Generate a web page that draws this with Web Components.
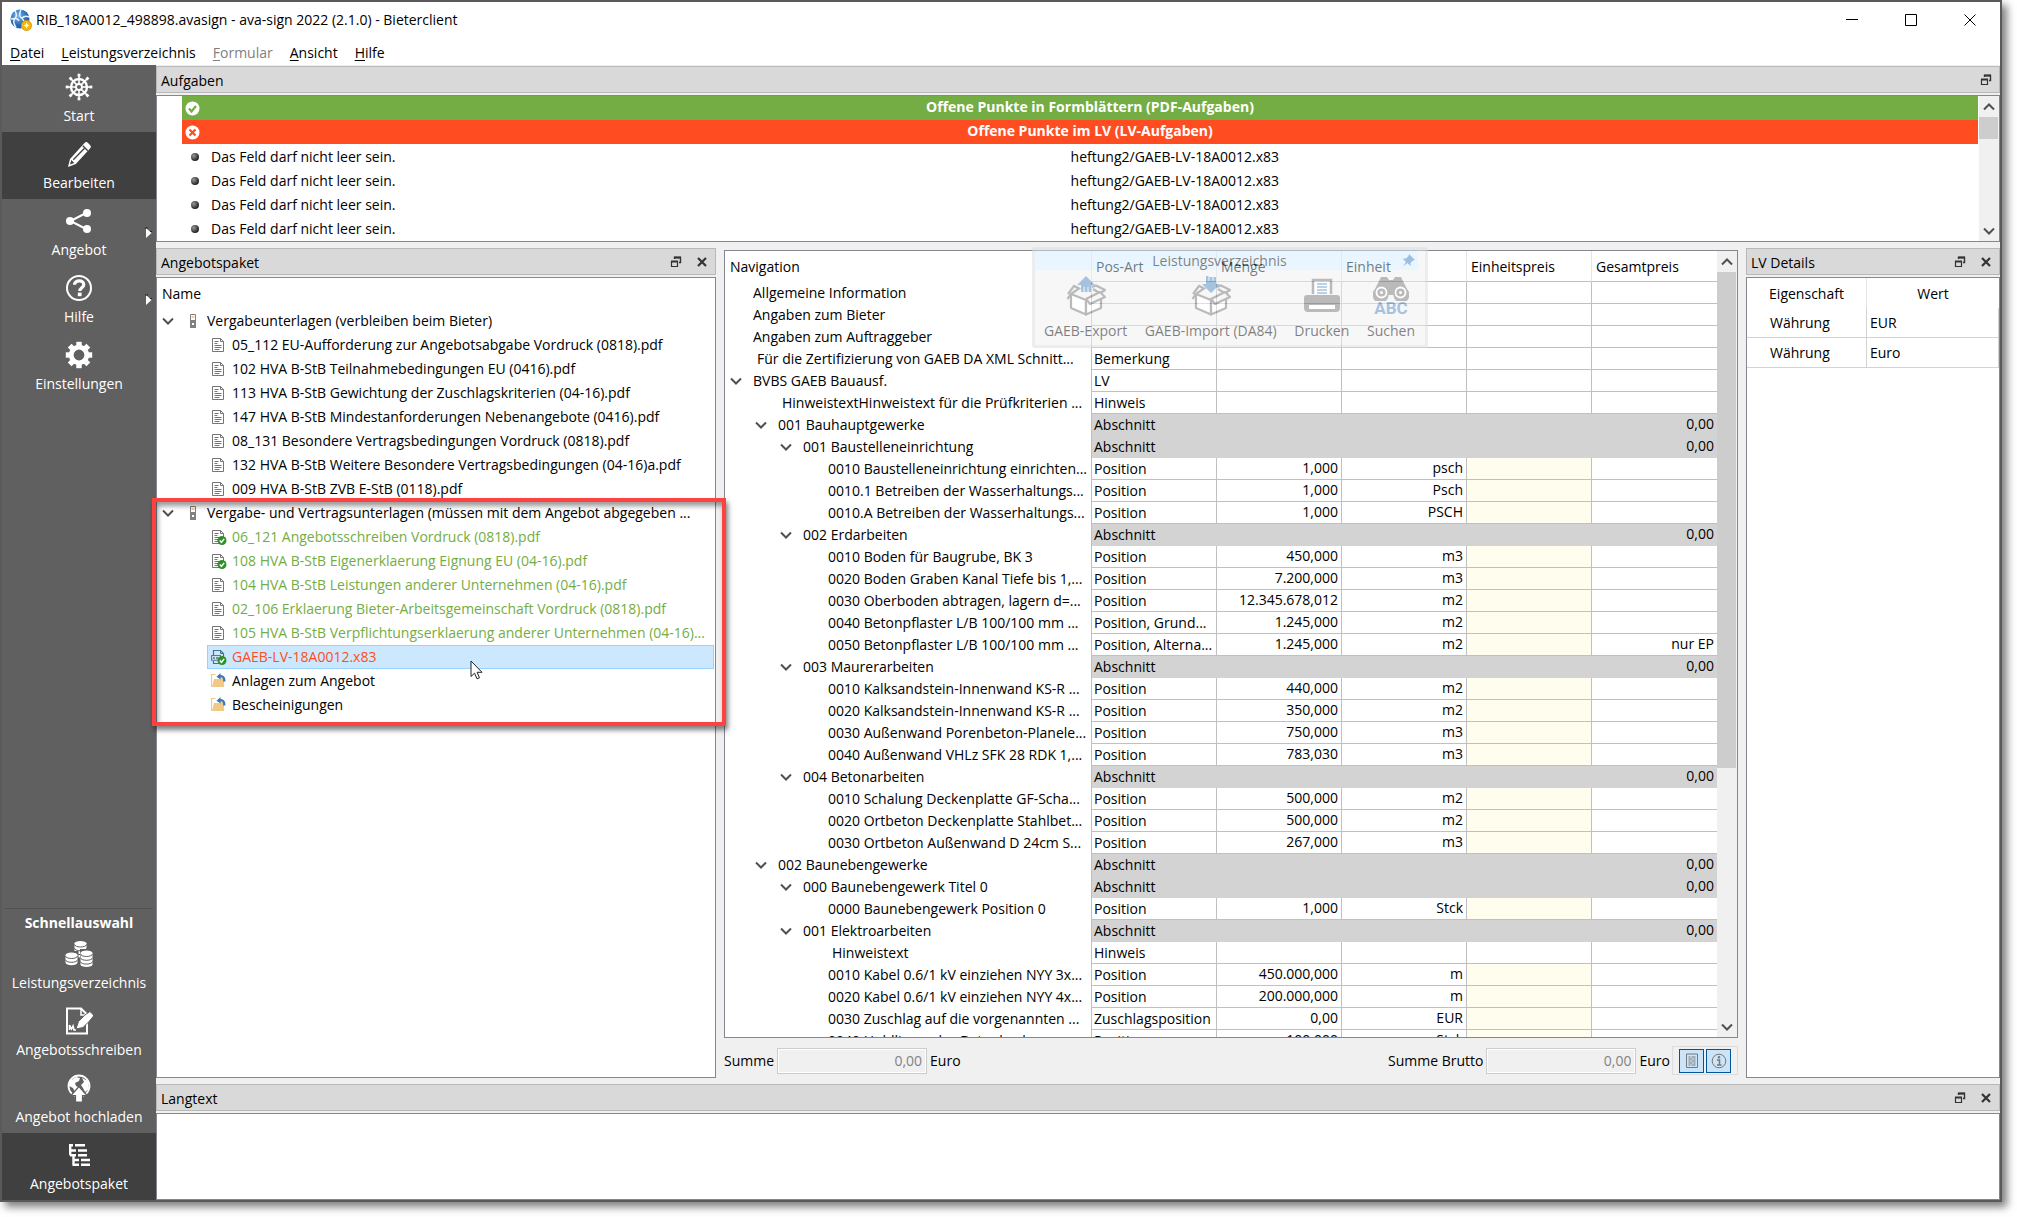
<!DOCTYPE html>
<html lang="de">
<head>
<meta charset="utf-8">
<title>ava-sign 2022</title>
<style>
html,body{margin:0;height:100%;background:#fff}
body{font:14px/20px "Open Sans","Noto Sans",sans-serif;color:#000;overflow:hidden}
</style>
</head>
<body>
<ava-app></ava-app>
<script>
const base = `<style>
*{box-sizing:border-box}
:host{display:block;box-sizing:border-box}
button{font:inherit;color:inherit;background:none;border:0;padding:0;margin:0;text-align:inherit}
a{color:inherit;text-decoration:none}
svg{display:block;flex:none}
</style>`;
function define(name, render, after){
  customElements.define(name, class extends HTMLElement{
    constructor(){ super(); this.attachShadow({mode:'open'}); }
    connectedCallback(){
      this.shadowRoot.innerHTML = base + render(this);
      if(after) after(this);
    }
  });
}
const svg = (w,h,vb,body,extra='') => `<svg width="${w}" height="${h}" viewBox="${vb}" aria-hidden="true" ${extra}>${body}</svg>`;
const spokes = (n,cx,cy,r1,r2,w,col) => Array.from({length:n},(_,i)=>{
  const a=i*2*Math.PI/n, c=Math.cos(a), s=Math.sin(a);
  return `<path d="M${(cx+c*r1).toFixed(2)} ${(cy+s*r1).toFixed(2)}L${(cx+c*r2).toFixed(2)} ${(cy+s*r2).toFixed(2)}" stroke="${col}" stroke-width="${w}"/>`;
}).join('');

const ICONS = {
  wheel: svg(28,28,'0 0 28 28',`<g fill="none" stroke="#fff"><circle cx="14" cy="14" r="8" stroke-width="2.4"/><circle cx="14" cy="14" r="3" stroke-width="1.8"/></g>`+spokes(8,14,14,3,12.6,1.6,'#fff')+spokes(8,14,14,10.5,13.3,2.8,'#fff')),
  pencil: svg(28,28,'0 0 28 28',`<path d="M3 27l2-8L19.500 3c1.200-1.200 2.300-1.200 3.500 0l2 2c1.200 1.200 1.200 2.300 0 3.500L10.800 24z" fill="#fff"/><path d="M8.300 19.800L19.500 8.300" stroke="#404040" stroke-width="1.300"/><path d="M17.800 5.800l5 5" stroke="#404040" stroke-width="1.300"/><path d="M5 24.500l1.300-4.500 3 3z" fill="#404040"/>`),
  share: svg(28,28,'0 0 28 28',`<path d="M22 5.500L5.500 14 22 22.500" fill="none" stroke="#fff" stroke-width="2"/><circle cx="22" cy="6" r="4" fill="#fff"/><circle cx="5" cy="14" r="4" fill="#fff"/><circle cx="22" cy="22" r="4" fill="#fff"/>`),
  help: svg(28,28,'0 0 28 28',`<circle cx="14" cy="14" r="12" fill="none" stroke="#fff" stroke-width="2"/><path d="M9.500 10.800c.2-5.300 9.300-5.300 9.300-.3 0 3.200-4 3.300-4 6.500" fill="none" stroke="#fff" stroke-width="3.200"/><path d="M12.800 18.600h3.800v3.600h-3.800z" fill="#fff"/>`),
  gear: svg(28,28,'0 0 28 28',spokes(8,14,14,8,13.2,5.4,'#fff')+`<circle cx="14" cy="14" r="7.800" fill="none" stroke="#fff" stroke-width="4.800"/>`),
  coins: svg(28,28,'0 0 28 28',(()=>{const st=(x,y,n)=>{let o=`<path d="M${x-6} ${y}v${n*3.800}a6 2.600 0 0 0 12 0v-${n*3.800}z" fill="#fff"/><ellipse cx="${x}" cy="${y}" rx="6" ry="2.600" fill="#fff"/>`;for(let i=0;i<n;i++)o+=`<path d="M${x-6} ${y+.9+i*3.800}a6 2.600 0 0 0 12 0" fill="none" stroke="#606060" stroke-width="1"/>`;return o};return st(15.500,3.500,3)+`<path d="M0 11h13.500v14H0zM15 9h13v19H15z" fill="#606060"/>`+st(6.500,15,2)+st(21.500,13,3)})()),
  sign: svg(28,28,'0 0 28 28',`<path d="M2 1.500h14l6 6v19H2z" fill="none" stroke="#fff" stroke-width="2"/><path d="M16 2v6h6" fill="none" stroke="#fff" stroke-width="1.500"/><path d="M11 22l2.500-7.500Q20 7 25 4.500L29 8.500Q25 14 18 20.500z" fill="#fff" stroke="#606060" stroke-width="1"/><path d="M4.500 23v-5l2 4 1.500-3 1 4h2" fill="none" stroke="#fff" stroke-width="1.600"/>`),
  globe: svg(28,28,'0 0 28 28',`<circle cx="14" cy="12" r="10.500" fill="none" stroke="#fff" stroke-width="1.800"/><path d="M5 7l6-4 4 1-1 3-4 2 1 3 4 2-2 5-3-1-2-4-4-2zM17 4l6 3 1 8-4 3-2-4-2-3 3-3z" fill="#fff"/><path d="M14 12.500l8 9h-4.500V28h-7v-6.500H6z" fill="#fff" stroke="#606060" stroke-width="1.200"/>`),
  tree: svg(28,28,'0 0 28 28',`<g fill="none" stroke="#fff" stroke-width="2.400"><path d="M5.200 3v11.200M4 4.200h4M10 4.200h10M5 9.500h6M13 9.500h9M5 14.200h6M13 14.200h9M8.500 14v10.800M8 19h6M16 19h9M8 23.800h6M16 23.800h9"/></g>`),
  doc: svg(14,16,'0 0 14 16',`<path d="M1.500 1.500h8l3 3v10h-11z" fill="#fff" stroke="#757575"/><path d="M9.500 1.500v3h3M3.500 4.500h4M3.500 6.500h3M3.500 8.500h7M3.500 10.500h7M3.500 12.500h5" fill="none" stroke="#757575"/>`),
  node: svg(6,14,'0 0 6 14',`<path d="M.5.500h5v13h-5z" fill="#fff" stroke="#808080"/><path d="M1.500 3h3" stroke="#f0a030"/><path d="M0 6h6v8H0z" fill="#808080"/><path d="M2 9h2v2H2z" fill="#fff"/>`),
  folder: svg(16,16,'0 0 16 16',`<path d="M4.500 1.500h-4V14" fill="#fff" stroke="#f0c987" stroke-width="1.200"/><path d="M3 6h5.500l1-1.500H13V14H1z" fill="#f0c987"/><path d="M8 4.200c2-2 5.800-1 5.300 4.300" fill="none" stroke="#3b78b5" stroke-width="2.200"/><path d="M5.500 3.800L9.500 0v6.500z" fill="#3b78b5"/>`),
};
const tick = `<circle cx="11" cy="11.500" r="4.500" fill="#2f8f2a"/><path d="M8.800 11.500l1.700 1.800 2.700-3.400" fill="none" stroke="#fff" stroke-width="1.500"/>`;
ICONS.docok = svg(16,16,'0 0 16 16',`<path d="M1.500 1.500h8l3 3v10h-11z" fill="#fff" stroke="#757575"/><path d="M9.500 1.500v3h3M3.500 4.500h4M3.500 6.500h3M3.500 8.500h7M3.500 10.500h7M3.500 12.500h5" fill="none" stroke="#757575"/>`+tick);
ICONS.lv = svg(16,16,'0 0 16 16',`<path d="M2.500 7v-5.500h7l3 3V8M2.500 12v2.500H8" fill="none" stroke="#46718f" stroke-width="1.200"/><path d="M9.500 1.500v3h3" fill="none" stroke="#46718f"/><rect x=".600" y="6.600" width="9" height="4.600" fill="#dcecf8" stroke="#46718f"/><path d="M2 9h2M5 9h2" stroke="#46718f" stroke-width="1.500"/>`+tick);
const chevron = (d) => svg(14,10,'0 0 14 10',`<path d="${d==='up'?'M2 7.500L7 2.500l5 5':'M2 2.500l5 5 5-5'}" fill="none" stroke="#505050" stroke-width="2"/>`);
const floatIcon = svg(12,12,'0 0 12 12',`<path d="M4.500 3V1.500h6v5H9" fill="none" stroke="#333" stroke-width="1.400"/><path d="M4 1.500h7" stroke="#333" stroke-width="2"/><path d="M1.500 5.500h6v5h-6z" fill="#d9d9d9" stroke="#333" stroke-width="1.200"/><path d="M1 5.500h7" stroke="#333" stroke-width="2"/>`);
const closeIcon = svg(12,12,'0 0 12 12',`<path d="M2 2l8 8M10 2l-8 8" stroke="#333" stroke-width="2.200"/>`);

define('title-bar', () => `<style>
:host{display:flex;align-items:center;height:36px;padding-left:8px}
h1{font-size:14px;font-weight:400;margin:0 auto 0 4px}
button{width:59px;height:30px;display:grid;place-items:center}
button:last-child{margin-right:1px}
</style>
${svg(22,22,'0 0 22 22',`<defs><radialGradient id="g" cx=".4" cy=".35"><stop offset="0" stop-color="#7db8ea"/><stop offset="1" stop-color="#1f66b3"/></radialGradient></defs><circle cx="10" cy="10" r="9.500" fill="url(#g)"/><path d="M5 1.500c2 4 2 6 0 8s-1 6 1 9M11 .5c-2 4-2 7 1 9s2 6 0 10M1 10c3-1 7-1 8 2M12 9c2-2 5-2 7-1" fill="none" stroke="#e8f3fd" stroke-width="1.500"/><circle cx="16.500" cy="16.500" r="5" fill="#f3b816" stroke="#d99a00"/><path d="M16.500 13.500l1 2 2 1-2 1-1 2-1-2-2-1 2-1z" fill="#fff6cf"/>`)}
<h1>RIB_18A0012_498898.avasign - ava-sign 2022 (2.1.0) - Bieterclient</h1>
<button aria-label="Minimieren">${svg(12,12,'0 0 12 12','<path d="M0 5.500h12" stroke="#000"/>')}</button>
<button aria-label="Maximieren">${svg(12,12,'0 0 12 12','<path d="M.5.500h11v11H.5z" fill="none" stroke="#000"/>')}</button>
<button aria-label="Schließen">${svg(12,12,'0 0 12 12','<path d="M.5.500l11 11M11.500.500l-11 11" stroke="#000"/>')}</button>`);

define('menu-bar', () => `<style>
nav{display:flex;gap:17px;height:28px;align-items:center;padding:2px 8px 0}
button:disabled{color:#808080}
u{text-underline-offset:2px}
</style><nav>
<button><u>D</u>atei</button><button><u>L</u>eistungsverzeichnis</button><button disabled><u>F</u>ormular</button><button><u>A</u>nsicht</button><button><u>H</u>ilfe</button></nav>`);

define('side-item', el => `<style>
button{width:100%;height:67px;display:flex;flex-direction:column;align-items:center;justify-content:flex-start;gap:5px;padding-top:8px;color:#fff;position:relative;white-space:nowrap}
:host([active]) button{background:#404040}
.more{position:absolute;right:3px;top:28px}
</style><button>${ICONS[el.getAttribute('icon')]}<slot></slot>${el.hasAttribute('more')?svg(8,12,'0 0 8 12','<path d="M1 1l5.500 5L1 11z" fill="#fff"/><path d="M0 1h3M5 4.500h2" stroke="#222"/>','class="more"'):''}</button>`);

define('side-bar', () => `<style>
:host{background:#606060;display:flex;flex-direction:column}
.quick{margin-top:auto}
h2{margin:0 3px;border-top:1px solid #505050;font-size:14px;line-height:20px;padding:4px 0 0;text-align:center;color:#fff;font-weight:700;height:24px}
</style>
<side-item icon="wheel">Start</side-item>
<side-item icon="pencil" active>Bearbeiten</side-item>
<side-item icon="share" more>Angebot</side-item>
<side-item icon="help" more>Hilfe</side-item>
<side-item icon="gear">Einstellungen</side-item>
<div class="quick"><h2>Schnellauswahl</h2>
<side-item icon="coins">Leistungsverzeichnis</side-item>
<side-item icon="sign">Angebotsschreiben</side-item>
<side-item icon="globe">Angebot hochladen</side-item>
<side-item icon="tree" active>Angebotspaket</side-item></div>`);

define('dock-panel', el => `<style>
:host{display:flex;flex-direction:column;min-height:0;min-width:0}
header{display:flex;align-items:center;height:27px;background:#d9d9d9;border:1px solid #b8b8b8;padding:0 7px 0 4px;gap:14px}
h2{font:inherit;margin:0 auto 0 0;padding-top:3px}
.body{flex:1;margin-top:2px;border:1px solid #828790;background:#fff;min-height:0;overflow:hidden;display:flex;flex-direction:column}
</style><header><h2>${el.getAttribute('heading')}</h2><button aria-label="Abdocken">${floatIcon}</button>${el.hasAttribute('closable')?`<button aria-label="Schließen">${closeIcon}</button>`:''}</header><div class="body"><slot></slot></div>`);

define('scroll-bar', el => `<style>
:host{display:flex;flex-direction:column;background:#f0f0f0;width:20px;flex:none}
button{height:21px;display:grid;place-items:center;flex:none}
.track{flex:1;min-height:0}
.thumb{background:#cdcdcd;height:${el.getAttribute('size')};margin-right:1px}
</style><button aria-label="Nach oben">${chevron('up')}</button><div class="track"><div class="thumb"></div></div><button aria-label="Nach unten">${chevron('down')}</button>`);

define('task-list', () => `<style>
:host{display:flex;flex:1;min-height:0}
.list{flex:1;padding-left:25px;padding-right:1px}
.bar,.row{height:24px;display:flex;align-items:center}
.bar{color:#fff;font-weight:700;padding-left:3px}
.bar span{flex:1;text-align:center;padding:0 0 2px 2px}
.ok{background:#74ad43}.err{background:#ff4d21}
.row{display:grid;grid-template-columns:29px 18fr 19fr;padding-top:1px}
.dot{width:8px;height:8px;border-radius:50%;background:radial-gradient(circle at 35% 35%,#999,#222 70%);margin-left:9px}
</style><div class="list">
<div class="bar ok">${svg(15,15,'0 0 15 15','<circle cx="7.500" cy="7.500" r="7" fill="#fff"/><path d="M4 7.500l2.500 3 4.500-5.500" fill="none" stroke="#74ad43" stroke-width="2.200"/>')}<span>Offene Punkte in Formblättern (PDF-Aufgaben)</span></div>
<div class="bar err">${svg(15,15,'0 0 15 15','<circle cx="7.500" cy="7.500" r="7" fill="#fff"/><path d="M4.500 4.500l6 6M10.500 4.500l-6 6" fill="none" stroke="#ff4d21" stroke-width="2.200"/>')}<span>Offene Punkte im LV (LV-Aufgaben)</span></div>
${'<div class="row"><i class="dot"></i><span>Das Feld darf nicht leer sein.</span><span>heftung2/GAEB-LV-18A0012.x83</span></div>'.repeat(4)}
</div><scroll-bar size="22px"></scroll-bar>`);

const DOCS = [
 ['g','Vergabeunterlagen (verbleiben beim Bieter)'],
 ['doc','05_112 EU-Aufforderung zur Angebotsabgabe Vordruck (0818).pdf'],
 ['doc','102 HVA B-StB Teilnahmebedingungen EU (0416).pdf'],
 ['doc','113 HVA B-StB Gewichtung der Zuschlagskriterien (04-16).pdf'],
 ['doc','147 HVA B-StB Mindestanforderungen Nebenangebote (0416).pdf'],
 ['doc','08_131 Besondere Vertragsbedingungen Vordruck (0818).pdf'],
 ['doc','132 HVA B-StB Weitere Besondere Vertragsbedingungen (04-16)a.pdf'],
 ['doc','009 HVA B-StB ZVB E-StB (0118).pdf'],
 ['g','Vergabe- und Vertragsunterlagen (müssen mit dem Angebot abgegeben ...'],
 ['docok','06_121 Angebotsschreiben Vordruck (0818).pdf','done'],
 ['docok','108 HVA B-StB Eigenerklaerung Eignung EU (04-16).pdf','done'],
 ['doc','104 HVA B-StB Leistungen anderer Unternehmen (04-16).pdf','done'],
 ['doc','02_106 Erklaerung Bieter-Arbeitsgemeinschaft Vordruck (0818).pdf','done'],
 ['doc','105 HVA B-StB Verpflichtungserklaerung anderer Unternehmen (04-16)...','done'],
 ['lv','GAEB-LV-18A0012.x83','sel'],
 ['folder','Anlagen zum Angebot'],
 ['folder','Bescheinigungen'],
];
define('package-tree', () => `<style>
:host{padding-right:1px}
.head{height:31px;padding:6px 5px 0}
.row{display:flex;align-items:center;height:24px;white-space:nowrap}
.g{padding-left:4px}
.g .node{margin:0 11px 0 15px}
.leaf{margin-left:50px;padding-left:4px}
.leaf i{width:21px;flex:none}
.sel{border:1px solid #99d1ff;background:#cce8ff;color:#ff4d21;padding-left:3px}
.done{color:#74ad43}
</style><div class="head">Name</div>${DOCS.map(([k,t,c])=>k==='g'
 ? `<div class="row g">${chevron('down')}<span class="node">${ICONS.node}</span><span>${t}</span></div>`
 : `<div class="row leaf ${c||''}"><i>${ICONS[k]}</i><span>${t}</span></div>`).join('')}`);

const P='Position';
const LV = [
 [0,'Allgemeine Information'],[0,'Angaben zum Bieter'],[0,'Angaben zum Auftraggeber'],
 ['0n','Für die Zertifizierung von GAEB DA XML Schnitt...','Bemerkung'],
 ['0o','BVBS GAEB Bauausf.','LV'],
 ['1n','HinweistextHinweistext für die Prüfkriterien ...','Hinweis'],
 ['1o','001 Bauhauptgewerke','Abschnitt'],['2o','001 Baustelleneinrichtung','Abschnitt'],
 [3,'0010 Baustelleneinrichtung einrichten...',P,'1,000','psch'],
 [3,'0010.1 Betreiben der Wasserhaltungs...',P,'1,000','Psch'],
 [3,'0010.A Betreiben der Wasserhaltungs...',P,'1,000','PSCH'],
 ['2o','002 Erdarbeiten','Abschnitt'],
 [3,'0010 Boden für Baugrube, BK 3',P,'450,000','m3'],
 [3,'0020 Boden Graben Kanal Tiefe bis 1,...',P,'7.200,000','m3'],
 [3,'0030 Oberboden abtragen, lagern d=...',P,'12.345.678,012','m2'],
 [3,'0040 Betonpflaster L/B 100/100 mm ...','Position, Grund...','1.245,000','m2'],
 [3,'0050 Betonpflaster L/B 100/100 mm ...','Position, Alterna...','1.245,000','m2','nur EP'],
 ['2o','003 Maurerarbeiten','Abschnitt'],
 [3,'0010 Kalksandstein-Innenwand KS-R ...',P,'440,000','m2'],
 [3,'0020 Kalksandstein-Innenwand KS-R ...',P,'350,000','m2'],
 [3,'0030 Außenwand Porenbeton-Planele...',P,'750,000','m3'],
 [3,'0040 Außenwand VHLz SFK 28 RDK 1,...',P,'783,030','m3'],
 ['2o','004 Betonarbeiten','Abschnitt'],
 [3,'0010 Schalung Deckenplatte GF-Scha...',P,'500,000','m2'],
 [3,'0020 Ortbeton Deckenplatte Stahlbet...',P,'500,000','m2'],
 [3,'0030 Ortbeton Außenwand D 24cm S...',P,'267,000','m3'],
 ['1o','002 Baunebengewerke','Abschnitt'],['2o','000 Baunebengewerk Titel 0','Abschnitt'],
 [3,'0000 Baunebengewerk Position 0',P,'1,000','Stck'],
 ['2o','001 Elektroarbeiten','Abschnitt'],
 ['3n','Hinweistext','Hinweis'],
 [3,'0010 Kabel 0.6/1 kV einziehen NYY 3x...',P,'450.000,000','m'],
 [3,'0020 Kabel 0.6/1 kV einziehen NYY 4x...',P,'200.000,000','m'],
 [3,'0030 Zuschlag auf die vorgenannten ...','Zuschlagsposition','0,00','EUR'],
 [3,'0040 Hohlliegendes Betonbecken...',P,'100,000','Stck'],
];
define('lv-grid', () => `<style>
:host{display:flex;border:1px solid #828790;background:#fff;min-height:0;overflow:hidden}
.wrap{flex:1;overflow:hidden;min-width:0}
table{border-collapse:separate;border-spacing:0;table-layout:fixed;width:100%}
col.c{width:125px}
th{font-weight:400;text-align:left;height:31px;padding:1px 4px 0 5px;border-right:1px solid #e5e5e5;border-bottom:1px solid #c0c0c0}
th:not(:first-child){padding-left:4px}
th:first-child{border-bottom:0}
td{height:22px;padding:0 3px 0 2px;border-right:1px solid #c0c0c0;border-bottom:1px solid #c0c0c0;white-space:nowrap;overflow:hidden;line-height:20px}
td:first-child{border-bottom:0;padding:0}
th:last-child,td:last-child{border-right:0}
td:nth-child(n+3){text-align:right;line-height:18px;padding-bottom:2px}
.nav{display:flex;align-items:center;line-height:22px}
.nav i{width:24px;flex:none}
.d0{padding-left:4px}.d1{padding-left:29px}.d2{padding-left:54px}.d3{padding-left:79px}
.note{padding-left:4px}
.sec td:not(:first-child){background:#d3d3d3;border-color:#d3d3d3}
.pos td:nth-child(5){background:#fffdee}
</style><div class="wrap"><table><colgroup><col><col class="c"><col class="c"><col class="c"><col class="c"><col class="c"></colgroup>
<thead><tr><th>Navigation</th><th>Pos-Art</th><th>Menge</th><th>Einheit</th><th>Einheitspreis</th><th>Gesamtpreis</th></tr></thead>
<tbody>${LV.map(([l,t,a='',m='',e='',g=''])=>{const s=String(l);const sec=a==='Abschnitt';
return `<tr class="${sec?'sec':m?'pos':''}"><td><div class="nav d${s[0]}"><i>${s[1]==='o'?chevron('down'):''}</i><span class="${s[1]==='n'?'note':''}">${t}</span></div></td><td>${a}</td><td>${m}</td><td>${e}</td><td></td><td>${sec?'0,00':g}</td></tr>`}).join('')}</tbody></table></div>
<scroll-bar size="496px"></scroll-bar>`);

define('lv-details', () => `<style>
table{border-collapse:separate;border-spacing:0;width:100%;table-layout:fixed}
col:first-child{width:120px}
th{font-weight:400;height:30px;padding:2px 0 0;border-right:1px solid #e5e5e5}
td{height:30px;padding:0 3px;border-right:1px solid #d3d3d3;border-bottom:1px solid #d3d3d3}
td:first-child{padding-left:23px}
th:last-child{border-right:0}
</style><table><colgroup><col><col></colgroup><thead><tr><th>Eigenschaft</th><th>Wert</th></tr></thead><tbody><tr><td>Währung</td><td>EUR</td></tr><tr><td>Währung</td><td>Euro</td></tr></tbody></table>`);

define('sum-bar', () => `<style>
:host{display:flex;align-items:center;height:40px;padding-top:5px}
label{margin-right:3px}
input{width:150px;height:26px;border:1px solid #ccc;outline:1px solid #fff;outline-offset:-2px;background:#f0f0f0;color:#838383;font:inherit;text-align:right;padding:0 4px;margin:0 3px 0 0}
.right{margin-left:auto;display:flex;align-items:center}
.tools{display:flex;gap:2px;border:1px solid #dcdcdc;padding:2px 6px;margin-left:2px;height:29px}
.tools button{width:25px;height:24px;border:1px solid #00559b;background:#cce4f7;display:grid;place-items:center}
</style>
<label for="n">Summe</label><input id="n" value="0,00" disabled><span>Euro</span>
<div class="right"><label for="b">Summe Brutto</label><input id="b" value="0,00" disabled><span>Euro</span>
<div class="tools"><button aria-label="Liste">${svg(14,16,'0 0 14 16','<path d="M1.500 1h11v13.500h-11z" fill="none" stroke="#777"/><path d="M3.500 4h2m1 0h4M3.500 6h4m1 0h2M3.500 8h2m1 0h4M3.500 10h4m1 0h2M3.500 12h2m1 0h4" stroke="#777"/>')}</button><button aria-label="Info">${svg(16,16,'0 0 16 16','<circle cx="8" cy="8" r="6.800" fill="none" stroke="#777"/><path d="M6 7h2.500v5M6 12h4.500" fill="none" stroke="#777" stroke-width="1.500"/><circle cx="8" cy="4.300" r="1.200" fill="#777"/>')}</button></div></div>`);

const boxShape = `<path d="M5 18l15 6v14.500L5 32z" fill="#fff" stroke="#777" stroke-width="2.200" stroke-linejoin="round"/><path d="M20 24l15-5v13L20 38.500z" fill="#fff" stroke="#777" stroke-width="2.200" stroke-linejoin="round"/><path d="M5 18l-3.500 5M5 18l8-5.500-5-2.500-6 8M27 13l8 5" fill="none" stroke="#777" stroke-width="2.200"/><path d="M20 23l4 5 15-7-5-5z" fill="#f0f0f0" stroke="#777" stroke-width="2.200" stroke-linejoin="round"/><path d="M26 11l4-1.500 9 4.500-4 2.500" fill="none" stroke="#777" stroke-width="2.200" stroke-linejoin="round"/>`;
define('float-tools', () => `<style>
:host{width:396px;height:101px;background:#f0f0f0;border:3px solid #ddd;border-radius:3px;opacity:.5}
.t{height:20px;background:#d6efff;display:flex;align-items:center;justify-content:center;position:relative;margin-right:7px;padding:2px 14px 0 0}
.t button{position:absolute;right:3px;top:4px}
.row{display:flex;justify-content:space-between;padding:6px 10px 0 9px}
.row button{display:flex;flex-direction:column;align-items:center;gap:5px;white-space:nowrap}
.ic{display:grid;place-items:center;height:40px}
.find{font:700 17px/15px Roboto,"Open Sans",sans-serif;color:#4d86c0;place-items:end center}
</style><div class="t"><span>Leistungsverzeichnis</span><button aria-label="Anheften">${svg(13,13,'0 0 13 13','<path d="M7 0l6 6-2 .5-2.500 2.500 0 3L5.500 9 1 12.500 4 8 .5 4.500l3.500 0L6.500 2z" fill="#3d7fc0"/>')}</button></div>
<div class="row">
<button><span class="ic">${svg(40,40,'0 0 40 40',boxShape+'<path d="M20 0l9 9h-4v7h-2.500v-5h-1v5h-3v-5h-1v5H15V9h-4z" fill="#4d86c0"/>')}</span>GAEB-Export</button>
<button><span class="ic">${svg(40,40,'0 0 40 40',boxShape+'<path d="M20 17l-9-9h4V0h2.500v5h1V1h3v4h1V1H25v7h4z" fill="#4d86c0"/>')}</span>GAEB-Import (DA84)</button>
<button><span class="ic">${svg(38,36,'0 0 38 36','<path d="M10 16V2h18v14" fill="#fff" stroke="#777" stroke-width="2.500"/><path d="M14 6h10M14 9h10M14 12h10M14 15h10" stroke="#4d86c0" stroke-width="1.500"/><path d="M4 17h30q3 0 3 3v10q0 4-4 4H5q-4 0-4-4V20q0-3 3-3z" fill="#777"/><path d="M6 27h26v4H6z" fill="#fff"/>')}</span>Drucken</button>
<button><span class="ic find">${svg(36,25,'0 0 36 25','<path d="M8 1h6l2 3h4l2-3h6l6 12a8 8 0 1 1-13.500 6h-5A8 8 0 1 1 2 13z" fill="#777"/><g fill="#777" stroke="#fff" stroke-width="1.800"><circle cx="8.500" cy="16.500" r="5"/><circle cx="27.500" cy="16.500" r="5"/></g><circle cx="8.500" cy="16.500" r="1.500" fill="#fff"/><circle cx="27.500" cy="16.500" r="1.500" fill="#fff"/>')}<span>ABC</span></span>Suchen</button>
</div>`);

define('ava-app', () => `<style>
:host{height:100vh;padding:0 15px 15px 0}
.win{position:relative;height:100%;background:#f0f0f0;border:2px solid #5a5a5a;display:grid;grid-template:auto minmax(0,1fr)/154px minmax(0,1fr);box-shadow:5px 5px 8px rgba(0,0,0,.5)}
.top{grid-column:1/3;background:#fff;height:63px}
.main{display:flex;flex-direction:column;padding-top:1px;min-height:0}
.tasks{height:176px;margin-bottom:6px}
.mid{flex:1;display:flex;gap:8px;min-height:0}
.pack{width:560px;flex:none}
.centre{flex:1;display:flex;flex-direction:column;padding-top:2px;min-width:0;position:relative}
.centre lv-grid{flex:1}
.centre float-tools{position:absolute;left:308px;top:-1px}
.det{width:254px;flex:none}
.text{height:116px;margin-top:6px}
.mark{position:absolute;left:150px;top:496px;width:574px;height:228px;border:4px solid #ff4141;box-shadow:2px 4px 5px rgba(0,0,0,.5),inset 2px 4px 5px rgba(0,0,0,.4);pointer-events:none}
.cursor{position:absolute;left:468px;top:658px}
</style><div class="win">
<div class="top"><title-bar></title-bar><menu-bar></menu-bar></div>
<side-bar></side-bar>
<div class="main">
<dock-panel class="tasks" heading="Aufgaben"><task-list></task-list></dock-panel>
<div class="mid">
<dock-panel class="pack" heading="Angebotspaket" closable><package-tree></package-tree></dock-panel>
<div class="centre"><lv-grid></lv-grid><sum-bar></sum-bar><float-tools></float-tools></div>
<dock-panel class="det" heading="LV Details" closable><lv-details></lv-details></dock-panel>
</div>
<dock-panel class="text" heading="Langtext" closable></dock-panel>
</div>
<div class="mark"></div>
${svg(13,20,'0 0 13 20','<path d="M1 1v15.500l3.500-3.300 2.500 5.600 2.500-1-2.400-5.500H12z" fill="#fff" stroke="#222"/>','class="cursor"')}
</div>`);
</script>
</body>
</html>
